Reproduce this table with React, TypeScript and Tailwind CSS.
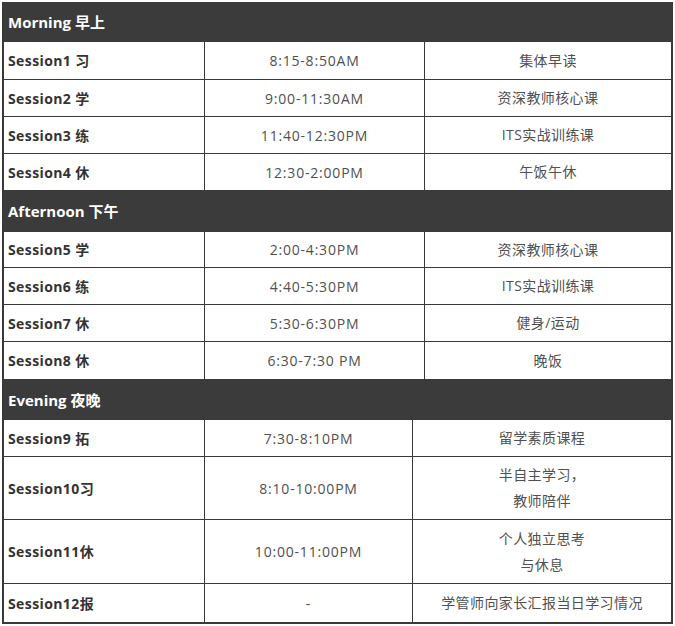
import React from 'react';

type Row = { name: string; time: string; desc: string[]; h: string };
type Section = { title: string; head: string; mid: string; rows: Row[] };

// heights/widths measured off the screenshot, kept as full class names
const sections: Section[] = [
  {
    title: 'Morning 早上',
    head: 'h-[40px]',
    mid: 'w-[221px]',
    rows: [
      { name: 'Session1 习', time: '8:15-8:50AM', desc: ['集体早读'], h: 'h-[38px]' },
      { name: 'Session2 学', time: '9:00-11:30AM', desc: ['资深教师核心课'], h: 'h-[37px]' },
      { name: 'Session3 练', time: '11:40-12:30PM', desc: ['ITS实战训练课'], h: 'h-[37px]' },
      { name: 'Session4 休', time: '12:30-2:00PM', desc: ['午饭午休'], h: 'h-[37px]' },
    ],
  },
  {
    title: 'Afternoon 下午',
    head: 'h-[41px]',
    mid: 'w-[221px]',
    rows: [
      { name: 'Session5 学', time: '2:00-4:30PM', desc: ['资深教师核心课'], h: 'h-[36px]' },
      { name: 'Session6 练', time: '4:40-5:30PM', desc: ['ITS实战训练课'], h: 'h-[37px]' },
      { name: 'Session7 休', time: '5:30-6:30PM', desc: ['健身/运动'], h: 'h-[37px]' },
      { name: 'Session8 休', time: '6:30-7:30 PM', desc: ['晚饭'], h: 'h-[38px]' },
    ],
  },
  {
    title: 'Evening 夜晚',
    head: 'h-[40px]',
    mid: 'w-[209px]',
    rows: [
      { name: 'Session9 拓', time: '7:30-8:10PM', desc: ['留学素质课程'], h: 'h-[37px]' },
      { name: 'Session10习', time: '8:10-10:00PM', desc: ['半自主学习，', '教师陪伴'], h: 'h-[63px]' },
      { name: 'Session11休', time: '10:00-11:00PM', desc: ['个人独立思考', '与休息'], h: 'h-[64px]' },
      { name: 'Session12报', time: '-', desc: ['学管师向家长汇报当日学习情况'], h: 'h-[38px]' },
    ],
  },
];

export default function App() {
  return (
    <div className="bg-white w-[675px] h-[626px] pt-[2px] pl-[2px] font-['Open_Sans','Noto_Sans_CJK_SC',sans-serif]">
      <div className="w-[671px] border-x-2 border-b-2 border-[#3a3a3a]">
        {sections.map((s, si) => (
          <div key={s.title}>
            <div
              className={`${s.head} bg-[#3b3b3b] text-white font-bold text-[15px] flex items-center pl-[4px]`}
            >
              {s.title}
            </div>
            {s.rows.map((r, ri) => {
              const last = si === sections.length - 1 && ri === s.rows.length - 1;
              return (
                <div
                  key={r.name}
                  className={`${r.h} flex text-[14px] ${last ? '' : 'border-b border-[#3a3a3a]'}`}
                >
                  <div className="w-[200px] shrink-0 flex items-center pl-[4px] font-bold text-[#333] tracking-[0.4px]">
                    {r.name}
                  </div>
                  <div
                    className={`${s.mid} shrink-0 border-x border-[#3a3a3a] flex items-center justify-center text-[#505050] tracking-[0.8px]`}
                  >
                    {r.time}
                  </div>
                  <div className="flex-1 flex flex-col items-center justify-center text-[#505050] tracking-[0.4px] leading-[26px]">
                    {r.desc.map((d) => (
                      <span key={d}>{d}</span>
                    ))}
                  </div>
                </div>
              );
            })}
          </div>
        ))}
      </div>
    </div>
  );
}
